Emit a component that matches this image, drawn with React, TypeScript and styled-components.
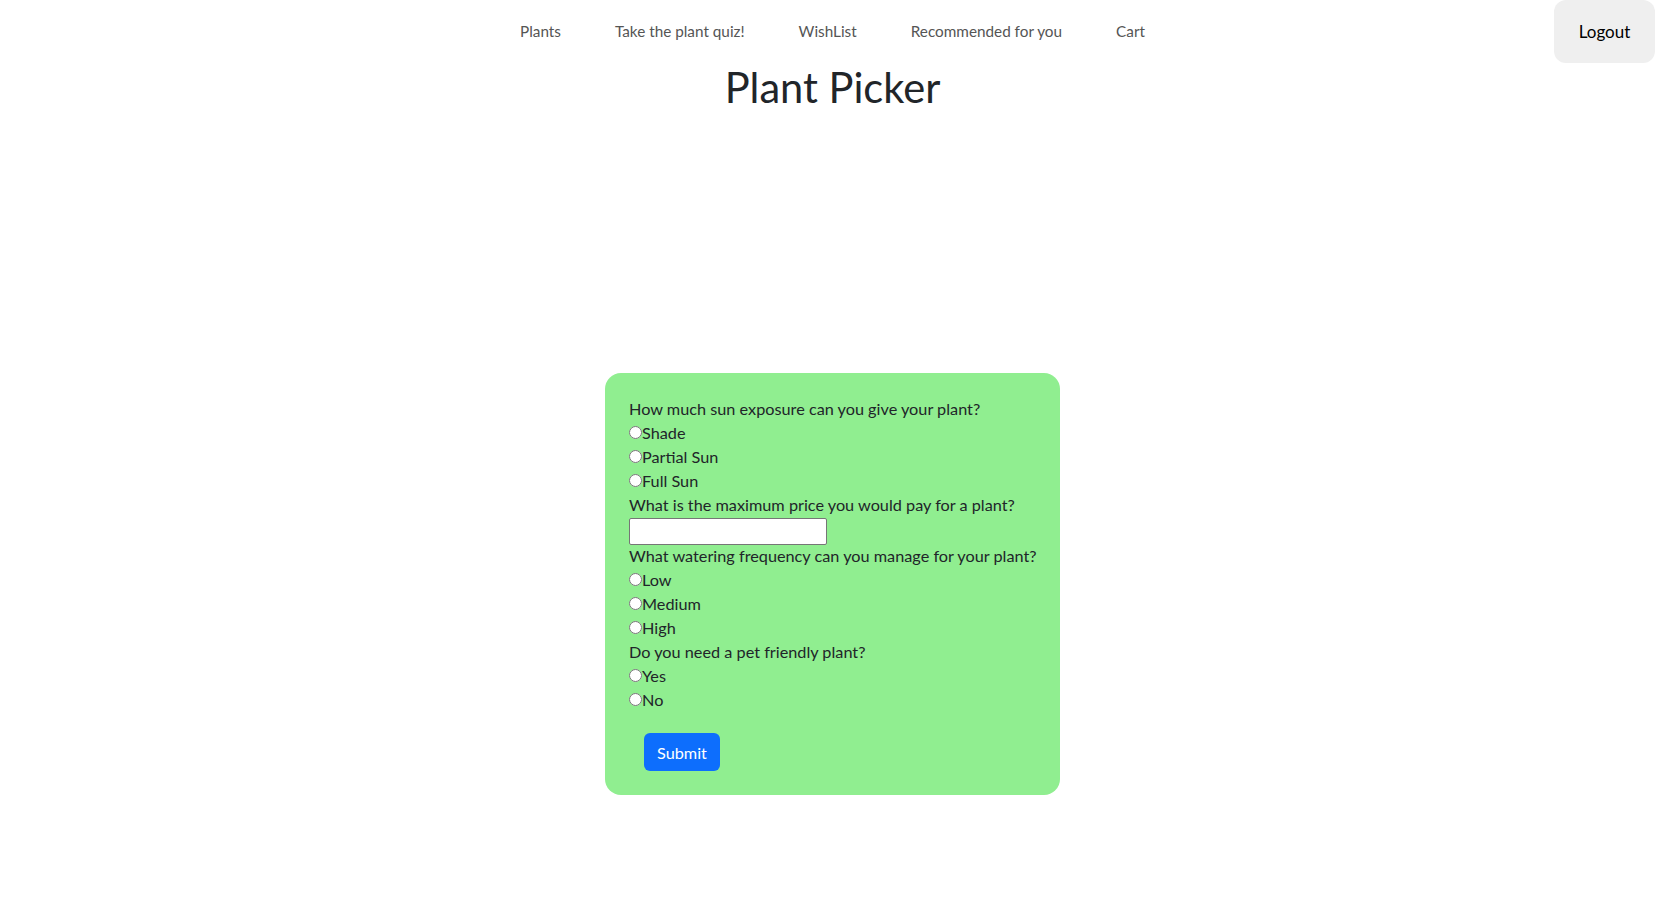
import { FC } from 'react';
import styled, { createGlobalStyle } from 'styled-components';

const GlobalStyle = createGlobalStyle`
	body {
		margin: 0;
		font-family: Lato, 'Liberation Sans', sans-serif;
		font-size: 16.25px;
		line-height: 24px;
		color: #212529;
		background: #fff;
	}
`;

const Page = styled.div({
	paddingLeft: '10px',
});

const Header = styled.header({
	display: 'grid',
	gridTemplateColumns: '1fr auto 1fr',
	alignItems: 'start',
	height: '63px',
});

const NavList = styled.nav({
	gridColumn: 2,
	display: 'flex',
	alignItems: 'center',
	height: '61px',
});

const NavLink = styled.a({
	padding: '0 27px',
	color: '#555',
	fontSize: '15.3px',
	textDecoration: 'none',
	cursor: 'pointer',
});

const LogoutButton = styled.button({
	gridColumn: 3,
	justifySelf: 'end',
	width: '101px',
	height: '63px',
	border: 'none',
	borderRadius: '12px',
	background: '#efefef',
	color: '#000',
	fontFamily: 'inherit',
	fontSize: '17px',
	cursor: 'pointer',
});

const Title = styled.h1({
	margin: '0',
	textAlign: 'center',
	fontSize: '41.6px',
	fontWeight: 400,
	lineHeight: '48px',
	color: '#212529',
});

const QuizForm = styled.form({
	width: '455px',
	boxSizing: 'border-box',
	margin: '262px auto 0',
	padding: '24px 20px 24px 24px',
	background: '#90ee90',
	borderRadius: '16px',
});

const Question = styled.div({
	lineHeight: '24px',
	whiteSpace: 'nowrap',
});

const Option = styled.label({
	display: 'flex',
	alignItems: 'center',
	height: '24px',
});

const Radio = styled.input.attrs({ type: 'radio' })({
	width: '13px',
	height: '13px',
	margin: '0 0 2px 0',
});

const PriceInput = styled.input({
	display: 'block',
	boxSizing: 'border-box',
	width: '198px',
	height: '27px',
	margin: '1px 0 -1px',
	border: '1px solid #767676',
	borderRadius: '2px',
	background: '#fff',
});

const SubmitButton = styled.button({
	display: 'block',
	margin: '21px 0 0 15px',
	height: '38px',
	padding: '0 13px',
	border: 'none',
	borderRadius: '6px',
	background: '#0d6efd',
	color: '#fff',
	fontFamily: 'inherit',
	fontSize: '16.25px',
	cursor: 'pointer',
});

const navItems = ['Plants', 'Take the plant quiz!', 'WishList', 'Recommended for you', 'Cart'];

interface RadioGroupProps {
	name: string;
	options: string[];
}

const RadioGroup: FC<RadioGroupProps> = ({ name, options }) => (
	<>
		{options.map((o) => (
			<Option key={o}>
				<Radio name={name} value={o} />
				{o}
			</Option>
		))}
	</>
);

const App: FC = () => {
	return (
		<Page>
			<GlobalStyle />
			<Header>
				<NavList>
					{navItems.map((item) => (
						<NavLink key={item}>{item}</NavLink>
					))}
				</NavList>
				<LogoutButton>Logout</LogoutButton>
			</Header>
			<Title>Plant Picker</Title>
			<QuizForm onSubmit={(e) => e.preventDefault()}>
				<Question>How much sun exposure can you give your plant?</Question>
				<RadioGroup name='sun' options={['Shade', 'Partial Sun', 'Full Sun']} />
				<Question>What is the maximum price you would pay for a plant?</Question>
				<PriceInput type='text' />
				<Question>What watering frequency can you manage for your plant?</Question>
				<RadioGroup name='water' options={['Low', 'Medium', 'High']} />
				<Question>Do you need a pet friendly plant?</Question>
				<RadioGroup name='pet' options={['Yes', 'No']} />
				<SubmitButton type='submit'>Submit</SubmitButton>
			</QuizForm>
		</Page>
	);
};

export default App;
